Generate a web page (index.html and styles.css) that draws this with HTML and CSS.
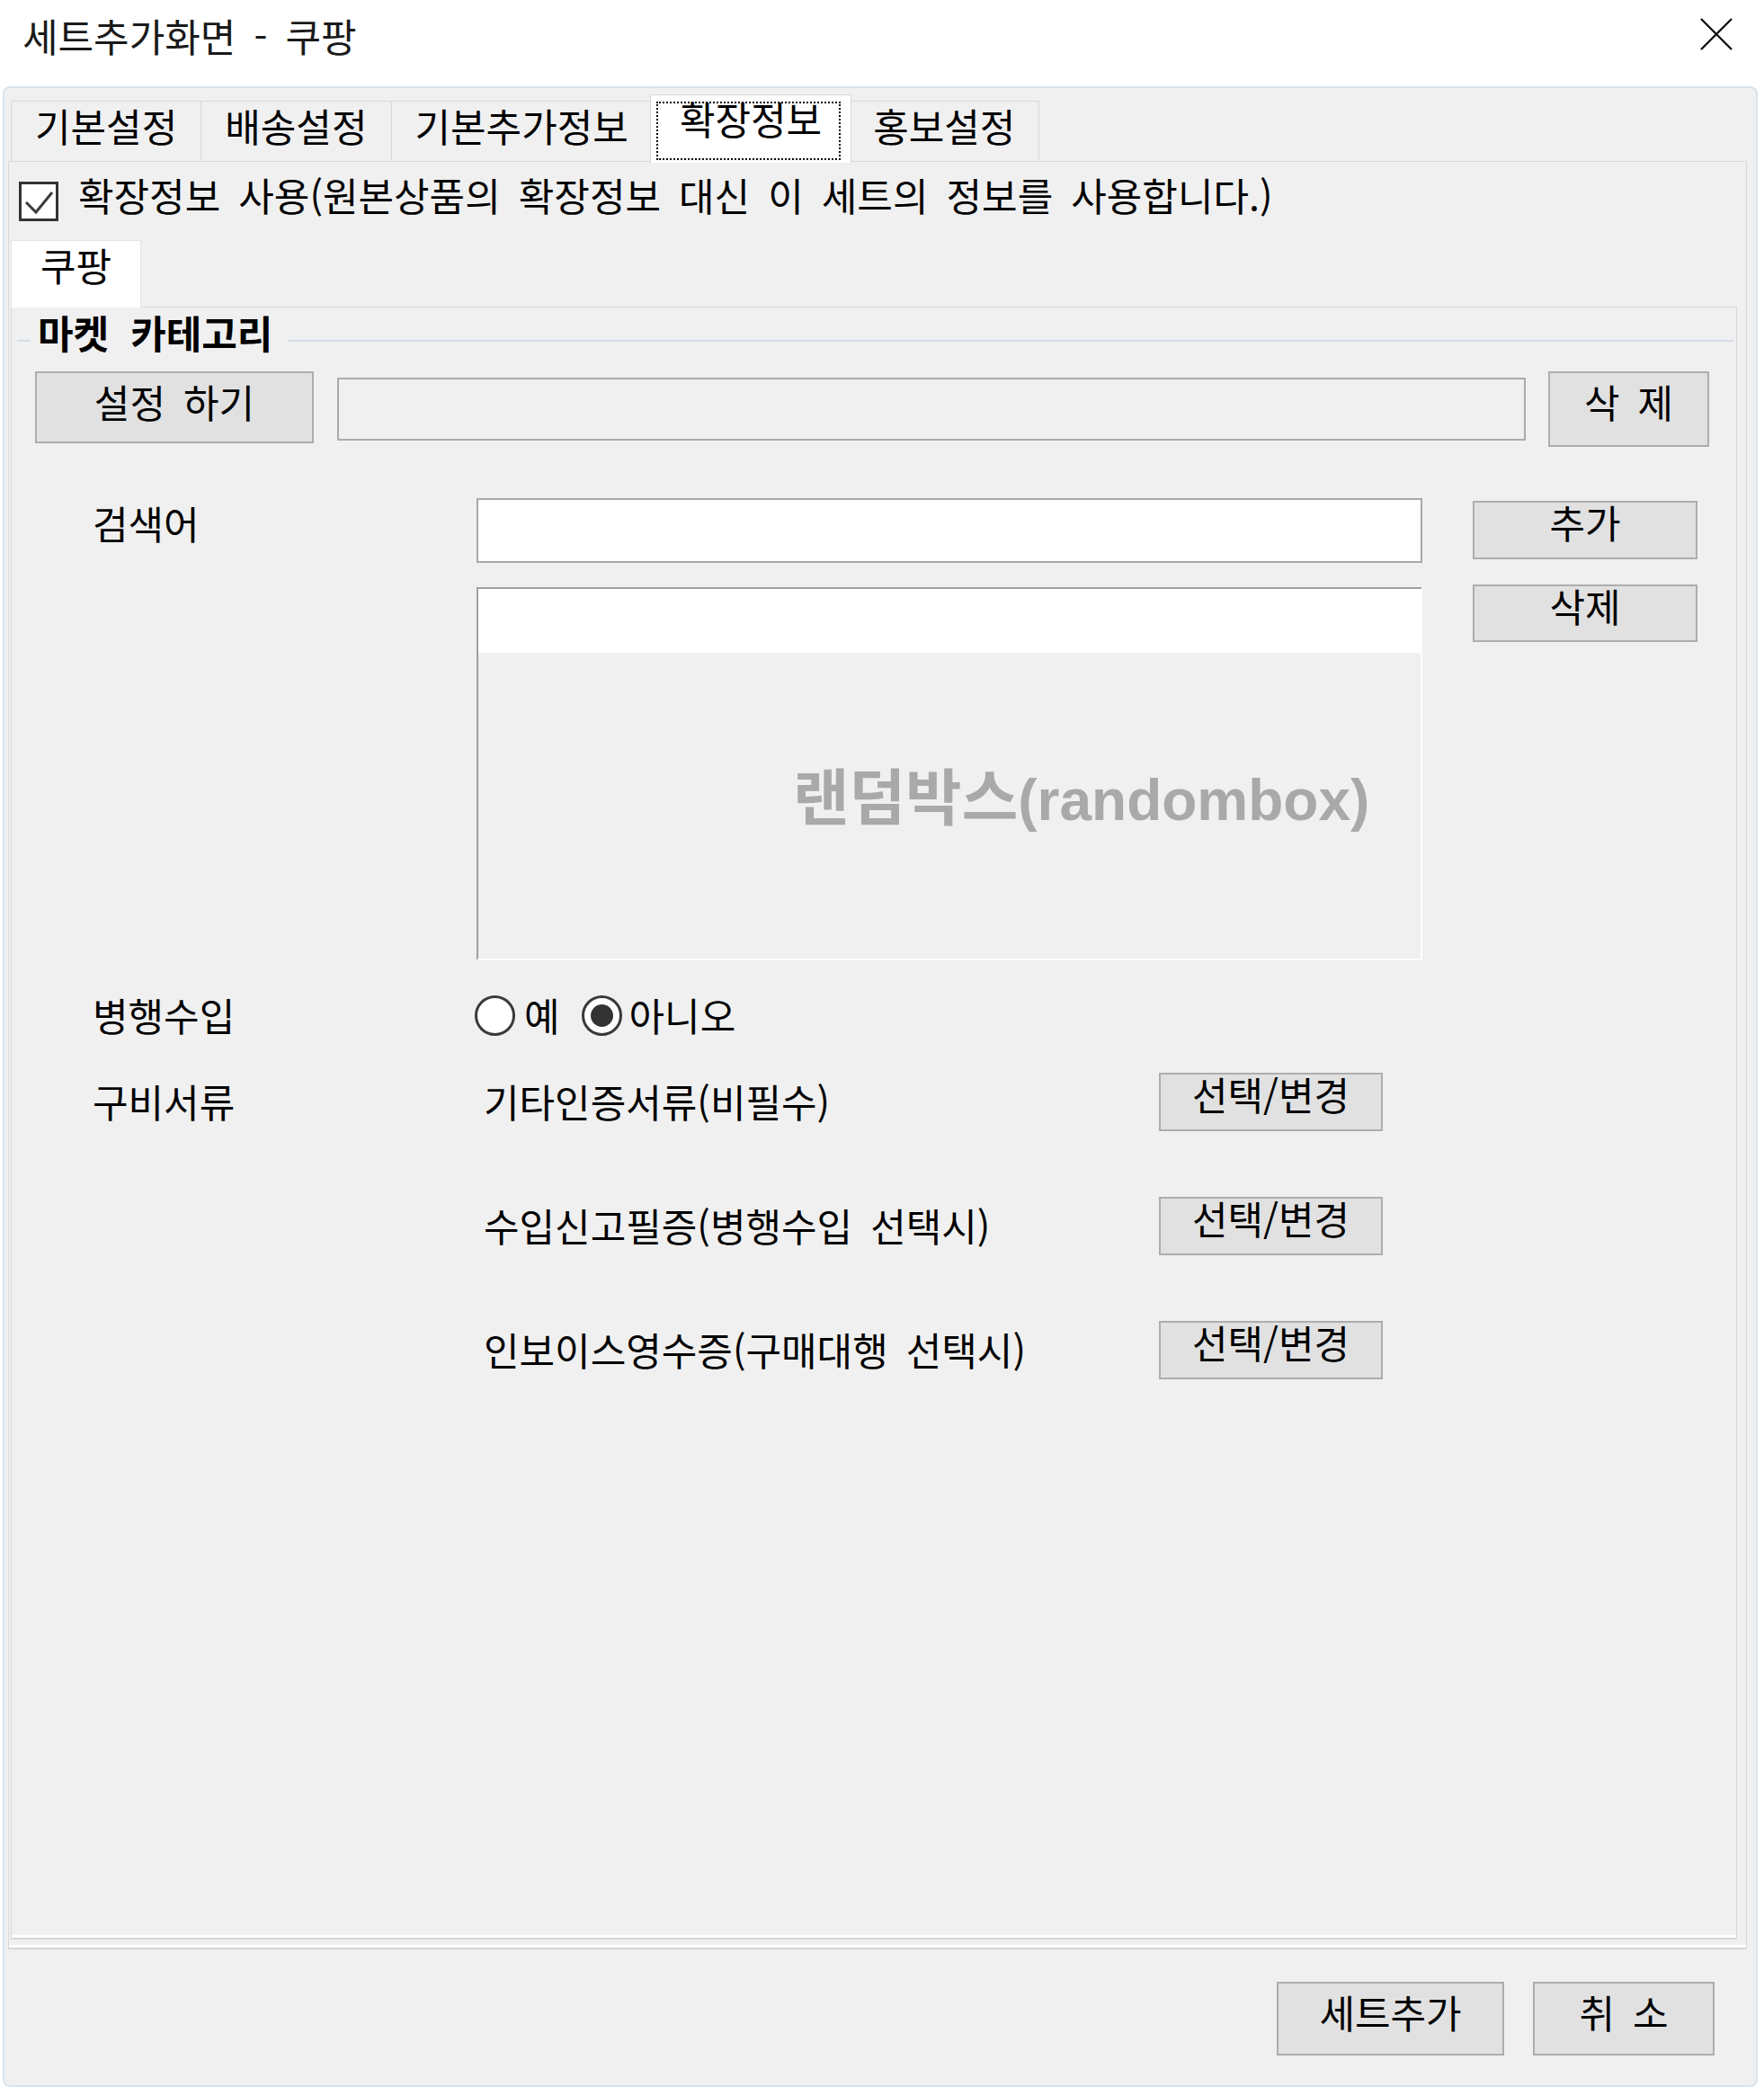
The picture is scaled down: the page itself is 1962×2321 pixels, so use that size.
FILE: index.html
```html
<!DOCTYPE html>
<html lang="ko">
<head>
    <meta charset="UTF-8">
    <meta name="viewport" content="width=device-width, initial-scale=1.0">
    <title>세트추가화면 - 쿠팡</title>
    <link rel="stylesheet" href="styles.css">
</head>
<body>
    <div class="titlebar">
        <span class="title">세트추가화면 - 쿠팡</span>
        <svg class="close" width="38" height="36" viewBox="0 0 38 36">
            <path d="M2 1 L36 35 M36 1 L2 35" stroke="#111" stroke-width="2.4" fill="none"/>
        </svg>
    </div>

    <div class="client">
        <div class="tabctl">
            <div class="tabs">
                <div class="tab">기본설정</div>
                <div class="tab">배송설정</div>
                <div class="tab">기본추가정보</div>
                <div class="tab active">확장정보</div>
                <div class="tab">홍보설정</div>
            </div>

            <div class="tabpage">
                <div class="check-row">
                    <span class="checkbox">
                        <svg width="38" height="38" viewBox="0 0 38 38">
                            <path d="M5 20 L16 31 L34 9" stroke="#3c3c3c" stroke-width="3" fill="none"/>
                        </svg>
                    </span>
                    <span class="check-text">확장정보 사용(원본상품의 확장정보 대신 이 세트의 정보를 사용합니다.)</span>
                </div>

                <div class="subtabs">
                    <div class="subtab">쿠팡</div>
                </div>

                <div class="subpage">
                    <div class="group-title"><span>마켓 카테고리</span></div>

                    <div class="cat-row">
                        <button class="btn btn-lg btn-set">설정 하기</button>
                        <div class="cat-input"></div>
                        <button class="btn btn-lg btn-del">삭 제</button>
                    </div>

                    <div class="form">
                        <div class="row">
                            <div class="label label-keyword">검색어</div>
                            <div class="textbox"></div>
                            <button class="btn btn-side btn-add">추가</button>
                        </div>

                        <div class="row row-list">
                            <div class="label"></div>
                            <div class="listbox">
                                <div class="list-item"></div>
                                <div class="watermark"><span class="wm-ko">랜덤박스</span>(randombox)</div>
                            </div>
                            <button class="btn btn-side">삭제</button>
                        </div>

                        <div class="row row-import">
                            <div class="label label-import">병행수입</div>
                            <div class="radios">
                                <span class="radio"></span>
                                <span class="radio-text">예</span>
                                <span class="radio checked"></span>
                                <span class="radio-text">아니오</span>
                            </div>
                        </div>

                        <div class="row row-docs">
                            <div class="label label-docs">구비서류</div>
                            <div class="docs">
                                <div class="doc">
                                    <span class="doc-name">기타인증서류(비필수)</span>
                                    <button class="btn btn-doc">선택/변경</button>
                                </div>
                                <div class="doc">
                                    <span class="doc-name">수입신고필증(병행수입 선택시)</span>
                                    <button class="btn btn-doc">선택/변경</button>
                                </div>
                                <div class="doc">
                                    <span class="doc-name">인보이스영수증(구매대행 선택시)</span>
                                    <button class="btn btn-doc">선택/변경</button>
                                </div>
                            </div>
                        </div>
                    </div>
                </div>
            </div>
        </div>

        <div class="footer">
            <button class="btn btn-lg btn-ok">세트추가</button>
            <button class="btn btn-lg btn-cancel">취 소</button>
        </div>
    </div>
</body>
</html>
```

FILE: styles.css
```css
body {
    margin: 0;
    width: 1962px;
    height: 2321px;
    overflow: hidden;
    background-color: #fff;
    font-family: "Noto Sans CJK KR", "Noto Sans", sans-serif;
    font-size: 43px;
    line-height: 40px;
    word-spacing: 8px;
    color: #000;
}

/* window caption */
.titlebar {
    height: 96px;
    box-sizing: border-box;
    padding: 19px 34px 0 25px;
    display: flex;
    justify-content: space-between;
    align-items: flex-start;
    background-color: #fff;
}
.title {
    color: #1a1a1a;
}
.close {
    margin-top: 1px;
}

.client {
    margin-left: 3px;
    width: 1952px;
    height: 2225px;
    box-sizing: border-box;
    border: 2px solid #dae3eb;
    border-radius: 8px;
    background-color: #f0f0f0;
}

/* main tab control */
.tabctl {
    margin: 0 10px 0 4px;
}
.tabs {
    height: 81px;
    padding-left: 3px;
    display: flex;
    align-items: flex-end;
}
.tab {
    height: 67px;
    box-sizing: border-box;
    padding: 6px 26px 0;
    border: 1px solid #d9d9d9;
    border-bottom: none;
    background-color: #f0f0f0;
    white-space: nowrap;
}
.tab + .tab {
    margin-left: -1px;
}
.tab.active {
    position: relative;
    z-index: 1;
    height: 76px;
    padding: 5px 32px 0;
    margin: 0 -2px -2px -3px;
    background-color: #fff;
}
.tab.active::after {
    content: "";
    position: absolute;
    left: 6px;
    right: 11px;
    top: 7px;
    bottom: 3px;
    border: 2px dotted #000;
}
.tabpage {
    height: 1989px;
    box-sizing: border-box;
    border: 1px solid #d9d9d9;
    border-bottom: 2px solid #d6d6d6;
    box-shadow: inset 0 -3px 0 #fff;
    background-color: #f0f0f0;
}

.check-row {
    margin-top: 16px;
    padding-left: 11px;
    display: flex;
    align-items: flex-start;
}
.checkbox {
    margin-top: 6px;
    width: 44px;
    height: 44px;
    box-sizing: border-box;
    border: 3px solid #333;
    background-color: #fff;
    display: flex;
}
.check-text {
    margin-left: 22px;
    white-space: nowrap;
}

/* coupang sub tab */
.subtabs {
    margin-top: 21px;
    height: 74px;
    padding-left: 2px;
    display: flex;
    align-items: flex-start;
}
.subtab {
    position: relative;
    z-index: 1;
    height: 75px;
    box-sizing: border-box;
    padding: 6px 32px 0;
    border: 1px solid #e4e4e4;
    border-bottom: none;
    background-color: #fff;
}
.subpage {
    margin: 0 10px 0 2px;
    height: 1816px;
    box-sizing: border-box;
    border: 1px solid #d9d9d9;
    border-bottom: 2px solid #d6d6d6;
    box-shadow: inset 0 -3px 0 #fff;
    background-color: #f0f0f0;
}

.group-title {
    margin: 7px 3px 0 6px;
    display: flex;
    align-items: flex-start;
}
.group-title::before,
.group-title::after {
    content: "";
    margin-top: 29px;
    height: 2px;
    background-color: #d3dde6;
}
.group-title::before {
    width: 15px;
}
.group-title::after {
    flex: 1;
}
.group-title span {
    padding: 0 18px 0 8px;
    font-weight: bold;
    word-spacing: 12px;
}

/* buttons */
.btn {
    margin: 0;
    padding: 1px 0 0;
    box-sizing: border-box;
    border: 2px solid #adadad;
    background-color: #e1e1e1;
    font-family: inherit;
    font-size: 43px;
    line-height: 40px;
    word-spacing: inherit;
    color: #000;
    display: flex;
    justify-content: center;
    align-items: flex-start;
    white-space: nowrap;
}
.btn-lg {
    padding-top: 11px;
}

.cat-row {
    margin-top: 24px;
    padding-left: 26px;
    display: flex;
    align-items: flex-start;
}
.btn-set {
    width: 310px;
    height: 80px;
}
.cat-input {
    margin: 7px 0 0 26px;
    width: 1322px;
    height: 70px;
    box-sizing: border-box;
    border: 2px solid #ababab;
    background-color: #f0f0f0;
}
.btn-del {
    margin-left: 25px;
    width: 179px;
    height: 84px;
}

/* form rows */
.form {
    margin-top: 57px;
    padding-left: 90px;
}
.row {
    display: flex;
    align-items: flex-start;
}
.label {
    width: 427px;
    flex-shrink: 0;
}
.label-keyword {
    padding-top: 7px;
}
.textbox {
    width: 1052px;
    height: 72px;
    box-sizing: border-box;
    border: 2px solid #a9a9a9;
    background-color: #fff;
}
.btn-side {
    margin-left: 56px;
    width: 250px;
    height: 65px;
}
.btn-add {
    margin-top: 3px;
}

.row-list {
    margin-top: 24px;
}
.listbox {
    position: relative;
    margin-top: 3px;
    width: 1052px;
    height: 415px;
    box-sizing: border-box;
    border: 2px solid #a0a0a0;
    border-right-color: #fff;
    border-bottom-color: #fff;
    background-color: #f0f0f0;
}
.list-item {
    height: 71px;
    background-color: #fff;
}
.watermark {
    position: absolute;
    left: 350px;
    top: 202px;
    font-family: "Liberation Sans", "Noto Sans CJK KR", sans-serif;
    font-size: 64px;
    line-height: 63px;
    font-weight: bold;
    word-spacing: 0;
    color: #a9a9a9;
    white-space: nowrap;
}
.wm-ko {
    font-size: 68px;
}
.row-list .btn-side {
    height: 64px;
}

.row-import {
    margin-top: 39px;
}
.label-import {
    padding-top: 1px;
}
.radios {
    margin-left: -2px;
    display: flex;
    align-items: flex-start;
}
.radio {
    width: 45px;
    height: 45px;
    box-sizing: border-box;
    border: 3px solid #3a3a3a;
    border-radius: 50%;
    background-color: #fff;
    display: flex;
    justify-content: center;
    align-items: center;
}
.radio.checked::after {
    content: "";
    width: 25px;
    height: 25px;
    border-radius: 50%;
    background-color: #333;
}
.radio-text {
    padding-top: 1px;
    margin: 0 24px 0 10px;
}
.radio-text:last-child {
    margin: 0 0 0 8px;
}

.row-docs {
    margin-top: 41px;
}
.label-docs {
    padding-top: 11px;
}
.docs {
    display: flex;
    flex-direction: column;
    gap: 73px;
}
.doc {
    display: flex;
    align-items: flex-start;
}
.doc-name {
    width: 759px;
    box-sizing: border-box;
    padding: 11px 0 0 8px;
    white-space: nowrap;
}
.btn-doc {
    width: 249px;
    height: 65px;
}

/* bottom buttons */
.footer {
    margin-top: 36px;
    padding-right: 46px;
    display: flex;
    justify-content: flex-end;
    gap: 32px;
}
.btn-ok {
    width: 253px;
    height: 82px;
}
.btn-cancel {
    width: 202px;
    height: 82px;
}
```
